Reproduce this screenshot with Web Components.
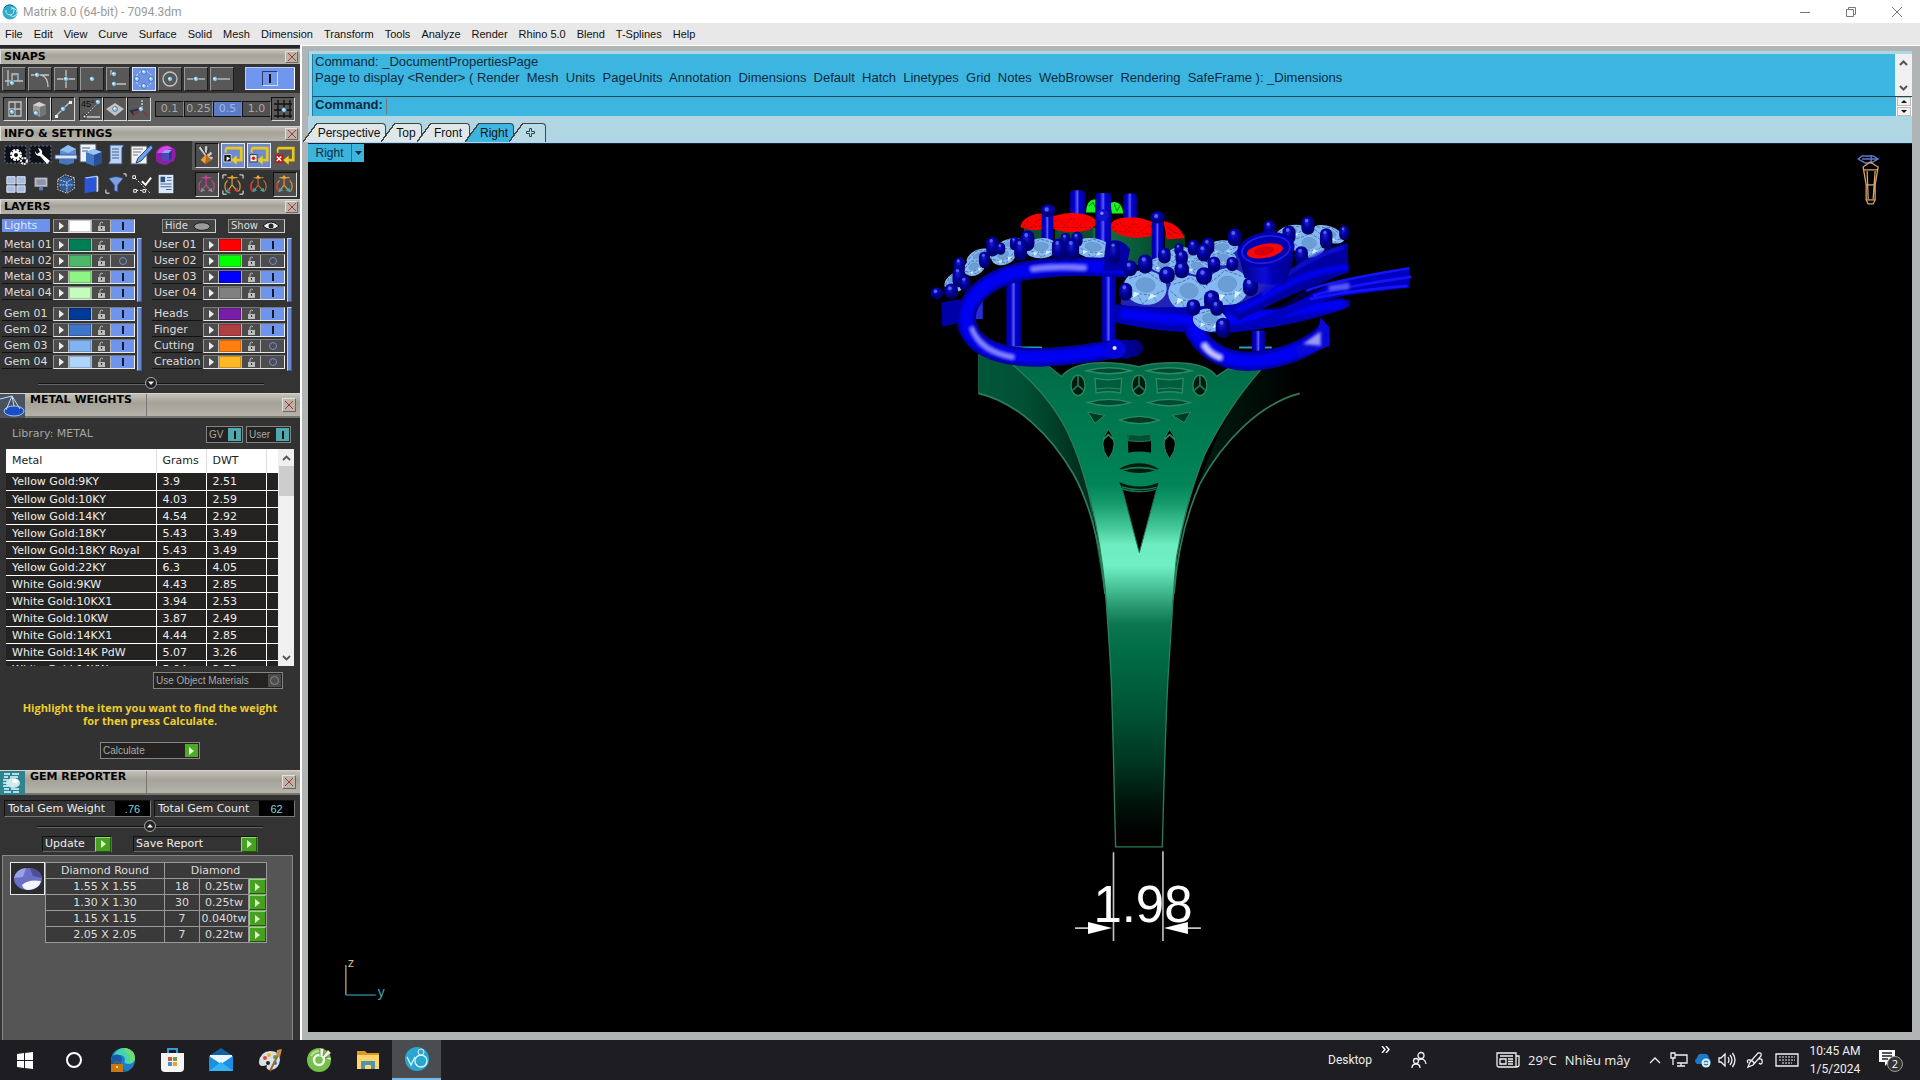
<!DOCTYPE html>
<html lang="en">
<head>
<meta charset="utf-8">
<title>Matrix 8.0 (64-bit) - 7094.3dm</title>
<style>
html,body{margin:0;height:100%}
body{background:#333;font-family:"DejaVu Sans",sans-serif;font-size:11px;line-height:14px;overflow:hidden}
matrix-app{height:100vh}
</style>
</head>
<body>
<matrix-app></matrix-app>
<script>
const BASE = `
*{box-sizing:border-box}
button{font:inherit;color:inherit;margin:0;padding:0;border:0;background:none;border-radius:0;display:flex;align-items:center;justify-content:center;line-height:inherit}
svg{display:block;flex:none}
`;
function define(name, css, html) {
  customElements.define(name, class extends HTMLElement {
    constructor() {
      super();
      const root = this.attachShadow({ mode: 'open' });
      root.innerHTML = '<style>' + BASE + css + '</style>' + (typeof html === 'function' ? html(this) : html);
    }
  });
}
const svg = (w, h, body, box) => `<svg width="${w}" height="${h}" viewBox="${box || `0 0 ${w} ${h}`}" fill="none" aria-hidden="true">${body}</svg>`;
const ball = (x, y) => `<circle cx="${x}" cy="${y}" r="2.4" fill="#9fd0ee" stroke="#24506e" stroke-width=".6"/><circle cx="${x - .7}" cy="${y - .7}" r=".9" fill="#fff"/>`;
const G = 'stroke="#c4c4c4" stroke-width="1.3"';

/* ---------- title bar ---------- */
define('title-bar', `
:host{display:flex;align-items:center;background:#fff;color:#999;font:12px/16px Roboto,sans-serif;padding-left:2px}
h1{font:inherit;margin:0 auto 0 5px}
button{width:46px;height:23px}`,
svg(16, 18, '<circle cx="8" cy="9" r="7.5" fill="#31a9c9"/><path d="M4 7a4 4 0 1 0 5-3M8 12a4 4 0 1 0 1-6" stroke="#b8ecf6"/><path d="M2 5q4-5 9-2" stroke="#176e8a"/>') +
`<h1><slot></slot></h1>
<button aria-label="Minimize">${svg(12, 12, '<path d="M1 6.5h10" stroke="#777"/>')}</button>
<button aria-label="Restore">${svg(12, 12, '<path d="M1.500 3.500h7v7h-7zM3.500 3.500v-2h7v7h-2" stroke="#777"/>')}</button>
<button aria-label="Close">${svg(12, 12, '<path d="M1 1l10 10M11 1L1 11" stroke="#777"/>')}</button>`);

/* ---------- menu ---------- */
define('menu-strip', `
:host{display:flex;align-items:center;background:#e8e8e8;color:#111;font:11px/14px "Liberation Sans",sans-serif;padding-left:5px;gap:11px}
button{white-space:nowrap}`,
['File','Edit','View','Curve','Surface','Solid','Mesh','Dimension','Transform','Tools','Analyze','Render','Rhino 5.0','Blend','T-Splines','Help'].map(t => `<button>${t}</button>`).join(''));

/* ---------- collapsible panel ---------- */
define('tool-panel', `
:host{display:block}
header{display:flex;align-items:center;height:15px;padding:0 2px 0 3px;background:linear-gradient(#c4c1b8,#a5a29a 40%,#b6b3aa);border-top:1px solid #d5d3cc;border-left:1px solid #ddd;color:#000}
h2{font:bold 11px/14px "DejaVu Sans",sans-serif;margin:0 auto 0 0}
button{width:13px;height:12px;background:#bab3aa;border:1px solid;border-color:#e4e0da #6b6760 #6b6760 #e4e0da}
.icon{display:none}
:host([tall]) header{height:25px;padding:0 4px 0 0;border-bottom:2px solid #77756f;align-items:stretch}
:host([tall]) .icon{display:block;width:25px;margin-left:-1px}
:host([tall]) h2{width:122px;padding-left:5px;margin:0 auto 0 0;line-height:12px;border-right:1px solid #777;height:22px}
:host([tall]) button{width:14px;height:14px;align-self:center}`,
`<header><span class="icon"><slot name="icon"></slot></span><h2><slot name="title"></slot></h2><button aria-label="Close panel">${svg(8, 8, '<path d="M0 0l8 8M8 0L0 8" stroke="#a33"/>')}</button></header><slot></slot>`);

/* ---------- snaps ---------- */
const snap1 = [
  `<path d="M5 2v16M2 13h18M9 13V6h6v7" ${G}/><path d="M10 7h5v5" stroke="#5c9edc"/>${ball(9, 15)}`,
  `<path d="M2 7h10Q19 9 19 19M10 7h10" ${G}/>${ball(8, 7)}`,
  `<path d="M2 11h18M11 2v18" ${G}/>${ball(11, 11)}`,
  ball(11, 11),
  `<path d="M4 2v5M7 16h12" ${G}/>${ball(7, 6)}${ball(7, 16)}`,
  `<circle cx="11" cy="11" r="8" stroke="#eaf2ff" stroke-dasharray="2 2"/>${ball(11, 4)}${ball(11, 18)}${ball(4, 11)}${ball(18, 11)}`,
  `<circle cx="11" cy="11" r="7" ${G}/>${ball(11, 11)}`,
  `<path d="M2 11h18" ${G}/>${ball(11, 11)}`,
  `<path d="M5 11h14" ${G}/>${ball(4, 11)}`
];
const snap2 = [
  `<path d="M5 4h12v14H5zM11 4v14M5 11h12" ${G}/>${ball(8, 14)}`,
  `<path d="M5 7l6-3 7 3v9l-6 3-7-3z" fill="#9a9a9a"/><path d="M5 7l6-3 7 3-6 2z" fill="#d2d2d2"/><path d="M12 9l6-2v9l-6 3z" fill="#757575"/>${ball(8, 15)}`,
  `<path d="M4 18L18 4" ${G}/><path d="M3 17h3v3H3zM17 3h3v3h-3z" fill="#eee"/>${ball(11, 11)}`,
  `<path d="M4 19L18 5" stroke="#fff" stroke-dasharray="1 2"/><path d="M5 19h15" stroke="#fff"/><path d="M3 17h3v3H3z" fill="#fff" stroke="#222"/>${ball(18, 4)}<text x="1" y="9" font-family="Liberation Sans" font-size="9" fill="#0c0c0c">45°</text>`,
  `<path d="M11 5l9 6-9 7-9-7z" fill="#c2c2c2"/>${ball(11, 11)}`,
  `<path d="M14 2v8" stroke="#fff" stroke-dasharray="2 1"/><path d="M13 11L3 13l3 4" stroke="#234" stroke-width="2"/><path d="M4 18l9-7 6 7" stroke="#a5242c" stroke-width="1.500" stroke-dasharray="3 1"/>${ball(13, 11)}`
];
define('snap-tools', `
:host{display:block;color:#bbb}
.row{display:flex}
.one{height:29px;padding:3px 5px 0 2px;gap:2px;background:#333}
.two{height:33px;padding:4px 4px 0 3px;background:#606060;align-items:flex-start}
.b{width:24px;height:24px;background:#585858;border:1px solid;border-color:#999 #1b1b1b #1b1b1b #999}
.two .b{border-color:#111 #d8d8d8 #d8d8d8 #111}
.b.on{background:#6f93e8;border-color:#dbe6ff}
.power{width:50px;height:23px;margin-left:auto;background:#7096ee;border:1px solid;border-color:#b9cbff #fff #fff #b9cbff}
.power i{width:16px;height:15px;border:1px solid #2b3d66;border-right-color:#cfe0ff;border-bottom-color:#cfe0ff;display:flex;justify-content:center;padding-top:2px}
.power i:after{content:"";width:2px;height:9px;background:#111}
.grp{display:flex;margin-right:4px}
.v{width:29px;height:16px;margin-top:4px;border:1px solid;border-color:#111 #888 #111 #111;background:#505050;color:#a9a9a9}
.v.on{background:#5b7cc4;color:#9cb6ee}`,
`<div class="row one">${snap1.map((s, i) => `<button class="b${i === 5 ? ' on' : ''}" aria-label="Snap ${i + 1}">${svg(22, 22, s)}</button>`).join('')}<button class="power" aria-label="Snaps on"><i></i></button></div>
<div class="row two"><div class="grp">${snap2.slice(0, 3).map(s => `<button class="b">${svg(22, 22, s)}</button>`).join('')}</div><div class="grp">${snap2.slice(3).map(s => `<button class="b">${svg(22, 22, s)}</button>`).join('')}</div>
${['0.1', '0.25', '0.5', '1.0'].map((t, i) => `<button class="v${i === 2 ? ' on' : ''}">${t}</button>`).join('')}
<button class="b">${svg(22, 22, '<path d="M6 2v18M12 2v18M18 2v18M2 6h18M2 12h18M2 18h18" stroke="#111" stroke-width="1.400"/>' + ball(12, 12))}</button></div>`);

/* ---------- info & settings ---------- */
const film = '<path d="M1 3h21v17H1z" fill="#0c1018" stroke="#5c719c" stroke-dasharray="2 2"/>';
const orb = (a, b, c, extra = '') => `<path d="M5 19a9 9 0 0 1 1-12M17 7a9 9 0 0 1 1 12M11 2v10M6 4h11M6 19l5-7 6 7" stroke="${a}" stroke-width="1.300"/><path d="M11 1l3 4H8z" fill="${b}"/><path d="M5 20l1-5 4 3zM18 20l-1-5-4 3z" fill="${c}"/>${extra}`;
const frameArrow = m => `<path d="M4 4h17v13h-6" stroke="#e8c81c" stroke-width="3"/><path d="M10 17l6-5v10z" fill="#e8d024"/><path d="M4 4v5" stroke="#e8c81c" stroke-width="2"/>${m}`;
const info1 = [
  film + '<circle cx="12" cy="12" r="4.500" stroke="#fff" stroke-width="3" stroke-dasharray="2.500 1"/><circle cx="12" cy="12" r="3" stroke="#fff" stroke-width="2"/><circle cx="20" cy="18" r="3" stroke="#eee" stroke-width="2" stroke-dasharray="2 .8"/>',
  film + '<path d="M6 8q0 5 5 5l7 8 3-3-8-7q1-5-4-6l2 4-3 2z" fill="#fff"/>',
  '<path d="M6 7l8-5 8 4v8H6z" fill="#5a8ed6"/><path d="M6 7l8-5 8 4-8 4z" fill="#8fbcf2"/><path d="M1 12h22v4H1z" fill="#dce8f8" stroke="#3b5d94"/><path d="M5 16h15v4l-7 2-8-2z" fill="#4576c0"/>',
  '<path d="M1 1h16v18H1z" fill="#eef4ff" stroke="#456"/><path d="M3 5h8M3 8h6" stroke="#557"/><path d="M7 9l8-3 8 3v11l-8 3-8-3z" fill="#3f76c8"/><path d="M7 9l8-3 8 3-8 3z" fill="#9cc4f5"/><path d="M15 12l8-3v11l-8 3z" fill="#264f96"/>',
  '<path d="M6 2h14l-2 3v16H4l2-3z" fill="#bcd4f2" stroke="#334d7a"/><path d="M8 6h7M8 9h7M8 12h7M8 15h7" stroke="#3c5f9a"/>',
  '<path d="M2 3h16v18H2z" fill="#eef2f6" stroke="#555"/><path d="M4 6h10M4 9h8M4 12h5" stroke="#777"/><path d="M22 2L9 15l-2 5 5-2L24 5z" fill="#6ba3e6" stroke="#244a86"/>',
  '<path d="M2 9q3-7 12-7l7 4q2 7-1 12l-8 4q-6 0-10-4z" fill="#8c1fa6"/><path d="M3 10Q6 3 14 3l5 3q-6 0-9 4z" fill="#d14be4"/><path d="M8 10h7v8H8z" fill="#4a49b8"/><path d="M8 10l3-3h7l-3 3z" fill="#9aa0f2"/><path d="M15 10l3-3v7l-3 4z" fill="#31309a"/>'
];
const info2 = [
  '<path d="M2 4h9v8H2zM13 4h9v8h-9zM2 14h9v7H2zM13 14h9v7h-9z" fill="#a9bce2" stroke="#e6eefc"/>',
  '<path d="M5 5h14v10H5z" fill="#b8bcc8"/><path d="M7 7h10v6H7z" fill="#8d94a8"/><path d="M10 15h4v4h-4z" fill="#5c7cc2"/>',
  '<circle cx="12" cy="12" r="8" fill="#2e5c9c"/><path d="M3 7l8-5 10 3v12l-8 5-10-4zM3 7l10 3 8-5M13 10v12M5 13h14" stroke="#cfe2ff" stroke-dasharray="2 1"/>',
  '<path d="M5 5l13-2v17L5 22z" fill="#2b56d8"/><path d="M5 5l13-2 2 1-13 2z" fill="#a5c1ff"/><path d="M18 3l2 1v16l-2 1z" fill="#dde"/>',
  '<path d="M4 6q8-4 16 0l-6 7v8l-4-2v-6z" fill="#7e9fe0" stroke="#2d4888"/><path d="M1 18v4h4M20 1h3v3" stroke="#fff"/>',
  '<path d="M3 3h3v3H3zM4 18h3v3H4zM14 18h3v3h-3z" stroke="#fff"/><path d="M6 6l12 12 4 4M7 19h7" stroke="#fff" stroke-dasharray="2 2"/><path d="M13 9l4 4 6-8" stroke="#fff" stroke-width="2"/>',
  '<path d="M4 2h16v20H4z" fill="#dbe8f8"/><path d="M6 4h5v6H6z" fill="#2c4f80"/><path d="M13 5h5M13 8h5M6 12h12M6 15h12M12 18h6" stroke="#385a8a"/>'
];
const info3 = [
  '<path d="M4 3l8 10M11 2v11M17 9l-6 5M18 15l-7-1" stroke="#ccc" stroke-width="2.500"/><path d="M6 3l6 9M14 4l-3 8" stroke="#222"/><path d="M5 17l6-6 6 6-7 4z" fill="#f0a030"/><path d="M11 11l6 6-7 4z" fill="#b86a18"/>',
  frameArrow('<path d="M2 11h8v8H2z" fill="#111" stroke="#ddd"/><path d="M5 13l4 2-4 3z" fill="#fff"/>'),
  frameArrow('<path d="M2 11h8v8H2z" fill="#eee" stroke="#333"/><circle cx="6" cy="15" r="2" fill="#c22"/>'),
  frameArrow('<path d="M1 11h9v9H1z" fill="#c01818"/><path d="M3 13l5 5M8 13l-5 5" stroke="#fff" stroke-width="1.500"/>')
];
const info4 = [orb('#c0488a', '#d23c96', '#8d8d8d'),
  orb('#e0a030', '#e8a030', '#d04050', '<path d="M1 5V1h4M19 1h4v4M23 18v4h-4M5 22H1v-4" stroke="#fff"/><path d="M4 18q2 3 5 2" stroke="#29b49a" stroke-width="2"/>'),
  orb('#b07038', '#e8b040', '#3aa894', '<path d="M5 19a9 9 0 0 1-1-9" stroke="#c2383a" stroke-width="2"/>'),
  orb('#e09838', '#f2a63c', '#3cb0a8', '<path d="M5 19a9 9 0 0 1-1-9" stroke="#c43c42" stroke-width="2"/>')];
define('info-tools', `
:host{display:block;background:#333}
.row{display:flex;height:29px;padding-left:3px;justify-content:space-between}
.l{display:flex}.l button{width:25px;height:28px}
.r{display:flex;gap:2px;padding:2px 2px 2px 3px;width:108px}
.top{background:#595959}
.r button{width:24px;height:25px}
.r .box{background:#4c4c4c;border:1px solid;border-color:#111 #ddd #ddd #111}
.r .blue{background:#6f8bd0;border:1px solid #dfe8ff}`,
`<div class="row"><div class="l">${info1.map(s => `<button>${svg(24, 24, s)}</button>`).join('')}</div><div class="r top">${info3.map((s, i) => `<button class="${['box', 'blue', 'blue', ''][i]}">${svg(22, 23, s, '0 0 24 24')}</button>`).join('')}</div></div>
<div class="row"><div class="l">${info2.map(s => `<button>${svg(22, 22, s, '0 0 24 24')}</button>`).join('')}</div><div class="r">${info4.map((s, i) => `<button class="${['box', '', '', 'box'][i]}">${svg(22, 22, s, '0 0 24 24')}</button>`).join('')}</div></div>`);

/* ---------- layers ---------- */
define('layer-controls', `
:host{display:flex;width:82px;height:14px;background:#b5b5b5;border:1px solid;border-color:#777 #f0f0f0 #e8e8e8 #999;gap:1px}
button{height:12px;background:#4b4b4b}
.a{width:14px}.c{width:22px;background:var(--c);border:1px solid #0003}.k{width:18px}.t{width:24px;flex:1;background:#6e94ec}
.t:after{content:"";width:2px;height:8px;background:#151a26}
:host([off]) .t{background:#4d4d4d}
:host([off]) .t:after{width:6px;height:6px;border-radius:50%;border:1px solid #6f8fd8;background:none}`,
`<button class="a" aria-label="Expand">${svg(5, 8, '<path d="M0 0l5 4-5 4z" fill="#eee"/>')}</button><button class="c" aria-label="Colour"></button><button class="k" aria-label="Lock">${svg(9, 10, '<path d="M3 5V2q2-2 3 0" stroke="#bbb"/><path d="M1 5h7v5H1z" fill="#bbb"/><path d="M4 6h1v2H4z" fill="#333"/>')}</button><button class="t" aria-label="Visible"></button>`);
const layer = ([n, c, off]) => `<div class="row"><span>${n}</span><layer-controls style="--c:${c}"${off ? ' off' : ''}></layer-controls></div>`;
const group = list => `<div class="grp"><div>${list.map(layer).join('')}</div><i></i></div>`;
define('layer-list', `
:host{display:block;height:179px;background:#333;color:#ddd;padding:5px 0 0 2px}
.top{display:flex;height:14px;margin-bottom:5px;padding-right:15px}
.lights{width:48px;height:13px;background:#6c92ea;color:#dfe8ff;justify-content:flex-start;padding-left:2px;margin-right:3px}
.hs{height:14px;border:1px solid;border-color:#888 #ccc #ccc #888;background:#444;font-size:10px;line-height:12px;padding:0 4px 0 2px;justify-content:space-between}
.hide{width:54px;margin-left:27px}.show{width:57px;margin-left:auto}
.cols{display:flex;gap:10px;margin-bottom:5px}
.grp{display:flex;gap:2px}
.grp i{width:5px;background:#6685cc;border:1px solid;border-color:#b9cdff #44589a #44589a #b9cdff}
.row{display:flex;height:16px;width:133px;justify-content:space-between}
.row span{width:50px;padding-left:2px;height:14px;line-height:13px;border-bottom:1px solid #111;white-space:nowrap}
rule-knob{margin-top:6px}`,
`<div class="top"><button class="lights">Lights</button><layer-controls style="--c:#fff"></layer-controls>
<button class="hs hide">Hide${svg(18, 9, '<ellipse cx="9" cy="4.500" rx="8" ry="3.800" fill="#999" stroke="#222"/>')}</button><button class="hs show">Show${svg(18, 10, '<path d="M1 5q8-8 16 0-8 7-16 0z" fill="#eee" stroke="#111"/><circle cx="9" cy="5" r="2.500" fill="#222"/>')}</button></div>
<div class="cols">${group([['Metal 01', '#007f55'], ['Metal 02', '#4cb96a', 1], ['Metal 03', '#8cf583'], ['Metal 04', '#c3fdbd']])}${group([['User 01', '#f00'], ['User 02', '#0f0', 1], ['User 03', '#00f'], ['User 04', '#808080']])}</div>
<div class="cols">${group([['Gem 01', '#003a96'], ['Gem 02', '#3f75c8'], ['Gem 03', '#82b4f3'], ['Gem 04', '#b0d3fa']])}${group([['Heads', '#7a1ea8'], ['Finger', '#ae4044'], ['Cutting', '#ff8010', 1], ['Creation', '#ffb726', 1]])}</div>
<rule-knob></rule-knob>`);
define('rule-knob', `
:host{display:flex;justify-content:center;align-items:center;height:12px;width:226px;margin:0 auto;background:linear-gradient(#111,#111) center/100% 1px no-repeat,linear-gradient(#666,#666) 0 7px/100% 1px no-repeat}
:host([up]) svg{transform:rotate(180deg)}
button{width:12px;height:12px}`,
`<button aria-label="Toggle section">${svg(12, 12, '<circle cx="6" cy="6" r="5.500" fill="#222" stroke="#aaa"/><path d="M3 4.500h6L6 8z" fill="#eee"/>')}</button>`);

/* ---------- metal weights ---------- */
const metals = [['Yellow Gold:9KY', '3.9', '2.51'], ['Yellow Gold:10KY', '4.03', '2.59'], ['Yellow Gold:14KY', '4.54', '2.92'], ['Yellow Gold:18KY', '5.43', '3.49'], ['Yellow Gold:18KY Royal', '5.43', '3.49'], ['Yellow Gold:22KY', '6.3', '4.05'], ['White Gold:9KW', '4.43', '2.85'], ['White Gold:10KX1', '3.94', '2.53'], ['White Gold:10KW', '3.87', '2.49'], ['White Gold:14KX1', '4.44', '2.85'], ['White Gold:14K PdW', '5.07', '3.26'], ['White Gold:14KW', '5.04', '3.75']];
define('metal-weights', `
:host{display:flex;flex-direction:column;height:352px;background:#323232;padding:8px 6px 0;color:#eee}
.lib{display:flex;gap:3px;height:17px;margin-bottom:6px;padding:0 3px 0 6px;color:#a5a5a5}
.lib span{margin-right:auto;line-height:15px}
.o{font:10px/14px "Liberation Sans",sans-serif;color:#a8a8a8;background:#242321;border:1px solid #858585;justify-content:space-between;padding:0 1px 0 2px;height:17px}
.o i{width:13px;height:13px;background:#4fa8ae;display:flex;align-items:center;justify-content:center}
.o i:after{content:"";width:2px;height:8px;background:#111}
.o.off i{background:#4c4c4c}.o.off i:after{width:7px;height:7px;border:1px solid #888;border-radius:50%;background:none}
.wrap{display:flex;height:217px;overflow:hidden;background:#242321;flex:none}
table{border-collapse:collapse;table-layout:fixed;width:272px}
th{font-weight:normal;text-align:left;background:#fff;color:#222;height:24px;border-right:1px solid #ddd;padding:0 0 0 6px}
td{height:17px;border-right:1px solid #fff;border-bottom:1px solid #fff;padding:1px 0 0 6px;white-space:nowrap;line-height:15px}
td:last-child,th:last-child{border-right:0}
th:nth-child(1){width:150px}th:nth-child(2){width:50px}th:nth-child(3){width:60px}
.sb{width:16px;background:#f0f0f0;display:flex;flex-direction:column;justify-content:space-between;align-items:center}
.sb button{width:16px;height:17px}.sb i{width:15px;height:30px;background:#cdcdcd;margin-bottom:auto}
.mat{width:130px;align-self:flex-end;margin:6px 11px 0 0;flex:none}
p{margin:12px 0 0;text-align:center;color:#eccf2c;font:bold 11px/13px "Open Sans",sans-serif}
.calc{width:100px;margin:15px 0 0 94px;flex:none}
.calc i{background:#4bab25}.calc i:after{width:0;height:0;background:none;border:4px solid transparent;border-left:5px solid #e8ffd8;border-right:0}`,
`<div class="lib"><span>Library: METAL</span><button class="o" style="width:37px">GV<i></i></button><button class="o" style="width:45px">User<i></i></button></div>
<div class="wrap"><table><thead><tr><th>Metal</th><th>Grams</th><th>DWT</th><th></th></tr></thead><tbody>${metals.map(r => `<tr><td>${r[0]}</td><td>${r[1]}</td><td>${r[2]}</td><td></td></tr>`).join('')}</tbody></table>
<div class="sb"><button aria-label="Up">${svg(9, 6, '<path d="M1 5l3.500-3.500L8 5" stroke="#555" stroke-width="1.800"/>')}</button><i></i><button aria-label="Down">${svg(9, 6, '<path d="M1 1l3.500 3.500L8 1" stroke="#555" stroke-width="1.800"/>')}</button></div></div>
<button class="o off mat">Use Object Materials<i></i></button>
<p>Highlight the item you want to find the weight<br>for then press Calculate.</p>
<button class="o calc">Calculate<i></i></button>`);

/* ---------- gem reporter ---------- */
const gems = [['1.55 X 1.55', 18, '0.25tw'], ['1.30 X 1.30', 30, '0.25tw'], ['1.15 X 1.15', 7, '0.040tw'], ['2.05 X 2.05', 7, '0.22tw']];
define('gem-reporter', `
:host{display:flex;flex-direction:column;flex:1;background:#333;color:#eee;padding:5px 0 0;font-size:11px}
.tot{display:flex;gap:3px;padding:0 5px 0 4px}
.tot div{display:flex;flex:1 1 141px;height:17px;border:1px solid #777;border-top-color:#111;border-left-color:#111;white-space:nowrap;justify-content:space-between;line-height:15px}
.tot div:first-child{flex-basis:147px}
.tot span{padding-left:3px}
output{width:35px;background:#000;color:#84d6d6;text-align:center;font:11px/16px "Liberation Sans",sans-serif}
rule-knob{margin:3px auto 4px}
.act{display:flex;gap:21px;padding-left:42px;height:16px;margin-bottom:3px}
.act button{border:1px solid;border-color:#111 #666 #666 #111;justify-content:space-between;padding-left:2px;height:16px}
.g{width:16px;height:15px;background:#48a023;border:1px solid;border-color:#8fe060 #1f5a0c #1f5a0c #8fe060;display:flex;align-items:center;justify-content:center}
.g:after{content:"";border:4px solid transparent;border-left:5px solid #d9ffc4;border-right:0}
.pan{flex:1;background:#555;border:1px solid #888;border-bottom:0;margin:0 7px 0 2px;padding:6px 0 0 7px;display:flex;align-items:flex-start}
.th{width:35px;height:33px;border:1px solid #e8e8e8;background:#2c2c2e;display:flex;align-items:center;justify-content:center}
table{border-collapse:collapse;table-layout:fixed;width:221px;background:#3a3a3a;color:#ddd}
th,td{border:1px solid #999;font-weight:normal;height:16px;padding:0;text-align:center;line-height:14px;white-space:nowrap}
.pan .g{width:17px;height:15px}`,
`<div class="tot"><div><span>Total Gem Weight</span><output>.76</output></div><div><span>Total Gem Count</span><output>62</output></div></div>
<rule-knob up></rule-knob>
<div class="act"><button style="width:70px">Update<i class="g"></i></button><button style="width:125px">Save Report<i class="g"></i></button></div>
<div class="pan"><div class="th">${svg(32, 28, '<ellipse cx="16" cy="14" rx="14" ry="11" fill="#6a6fc8"/><path d="M2 13q2-9 12-10l-3 9z" fill="#9aa0e4"/><path d="M18 3q11 2 12 10l-9-2z" fill="#4c4f9a"/><path d="M10 20q6-6 19-4-2 8-12 9-6 0-7-5z" fill="#f4f6ff"/>')}</div>
<table><colgroup><col style="width:119px"><col style="width:35px"><col style="width:49px"><col style="width:18px"></colgroup><thead><tr><th>Diamond Round</th><th colspan="3">Diamond</th></tr></thead><tbody>${gems.map(g => `<tr><td>${g[0]}</td><td>${g[1]}</td><td>${g[2]}</td><td><button class="g" aria-label="Show ${g[0]}"></button></td></tr>`).join('')}</tbody></table></div>`);

/* ---------- sidebar ---------- */
define('side-bar', `
:host{display:flex;flex-direction:column;width:300px;flex:none;background:#333;min-height:0;overflow:hidden}
.strip{height:4px;background:#24262b;border-bottom:1px solid #555;flex:none}
tool-panel{flex:none}`,
`<div class="strip"></div>
<tool-panel><span slot="title">SNAPS</span><snap-tools></snap-tools></tool-panel>
<tool-panel><span slot="title">INFO &amp; SETTINGS</span><info-tools></info-tools></tool-panel>
<tool-panel><span slot="title">LAYERS</span><layer-list></layer-list></tool-panel>
<tool-panel tall><span slot="icon">${svg(25, 24, '<path d="M0 0h25v24H0z" fill="#4a5260"/><ellipse cx="14" cy="17" rx="10" ry="5" fill="#1c4cc4" stroke="#9cc8ff"/><path d="M0 5l12-3 8 13M12 2l-6 14M12 2l2 10" stroke="#bfe0ff"/>')}</span><span slot="title">METAL WEIGHTS</span><metal-weights></metal-weights></tool-panel>
<tool-panel tall><span slot="icon">${svg(25, 24, '<path d="M0 0h25v24H0z" fill="#2f8390"/><path d="M4 3h6M12 3h7M4 6h4M10 6h8M4 18h5M11 18h8M4 21h7M13 21h6M3 9h5M3 12h4M3 15h5" stroke="#dff" stroke-width="1.500"/><ellipse cx="13" cy="12" rx="7" ry="5" fill="#cfe9ee"/><ellipse cx="15" cy="10" rx="3" ry="2" fill="#fff"/>')}</span><span slot="title">GEM REPORTER</span></tool-panel>
<gem-reporter></gem-reporter>`);

/* ---------- command area ---------- */
define('command-area', `
:host{display:flex;flex-direction:column;background:#b0d6e4;padding-top:3px;color:#102a3c;font:13px/16px "Liberation Sans",sans-serif;border-left:1px solid #7fb0c4}
.log{display:flex;height:43px;background:#3cb6e0;border-bottom:1px solid #1c4858;border-left:1px solid #247a9a;margin-left:3px}
.log pre{font:inherit;margin:0;flex:1;padding-left:2px;white-space:pre}
.sb{width:17px;background:#f0f0f0;display:flex;flex-direction:column;justify-content:space-between}
.sb button{width:17px;height:17px}
.cmd{display:flex;height:19px;background:#3cb6e0;margin-left:3px;border-left:1px solid #247a9a;align-items:flex-start}
label{font-weight:bold;padding:0 3px 0 2px}
input{flex:1;min-width:0;border:0;border-left:1px solid #777;background:none;font:inherit;outline:0;padding:0 2px;height:16px;margin-top:1px}
.spin{display:flex;flex-direction:column;width:16px;background:#fff;height:19px;gap:1px;padding:0 1px}
.spin button{height:9px;background:#f2f2f2;border:1px solid #bbb}`,
`<div class="log"><pre>Command: _DocumentPropertiesPage
Page to display &lt;Render&gt; ( Render  Mesh  Units  PageUnits  Annotation  Dimensions  Default  Hatch  Linetypes  Grid  Notes  WebBrowser  Rendering  SafeFrame ): _Dimensions</pre>
<div class="sb"><button aria-label="Up">${svg(9, 6, '<path d="M1 5l3.500-3.500L8 5" stroke="#555" stroke-width="2"/>')}</button><button aria-label="Down">${svg(9, 6, '<path d="M1 1l3.500 3.500L8 1" stroke="#555" stroke-width="2"/>')}</button></div></div>
<div class="cmd"><label for="c">Command:</label><input id="c" type="text"><div class="spin"><button aria-label="Previous">${svg(6, 3, '<path d="M0 3l3-3 3 3z" fill="#111"/>')}</button><button aria-label="Next">${svg(6, 3, '<path d="M0 0h6L3 3z" fill="#111"/>')}</button></div></div>`);

/* ---------- viewport tabs ---------- */
define('view-tabs', `
:host{display:flex;height:27px;align-items:flex-end;background:#b0d6e4;font:12px/16px "Liberation Sans",sans-serif;color:#111;padding-bottom:1px}
button{position:relative;height:19px;isolation:isolate;white-space:nowrap}
button:before{content:"";position:absolute;inset:0 0 0 9px;background:var(--f,#dfe7e9);border:1px solid #444;border-bottom:0;border-left:0;border-radius:0 4px 0 0;z-index:-1}
button:after{content:"";position:absolute;left:-5px;top:0;width:14px;height:19px;background:linear-gradient(to bottom right,transparent 47%,#444 47%,#444 53%,var(--f,#dfe7e9) 53%);z-index:-1}
.on{--f:#3cb6e0}.plus{--f:#b9dbe6}`,
[['Perspective', 78], ['Top', 36], ['Front', 48], ['Right', 44]].map(([t, w], i) => `<button role="tab" class="${i === 3 ? 'on' : ''}" style="width:${w}px;padding-left:4px">${t}</button>`).join('') +
`<button class="plus" aria-label="Add view" style="width:32px">${svg(9, 9, '<path d="M3.500.500h2v3h3v2h-3v3h-2v-3h-3v-2h3z" stroke="#345"/>')}</button>`);

/* ---------- ring model ---------- */
const gem = (x, y, rx, ry, r = 0) => `<g transform="translate(${x} ${y}) rotate(${r}) scale(1.08)"><ellipse rx="${rx}" ry="${ry}" fill="#84b8f0"/><path d="M${-rx * .9} 0L${-rx * .35} ${ry * .4} 0 ${ry * .95} ${rx * .4} ${ry * .4} ${rx * .9} 0M${-rx * .6} ${ry * .7}L${-rx * .35} ${ry * .4}H${rx * .4}L${rx * .6} ${ry * .7}M${-rx * .8} ${-ry * .4}L${-rx * .4} ${-ry * .6} 0 ${-ry * .9} ${rx * .5} ${-ry * .6} ${rx * .8} ${-ry * .4}" stroke="#3d6698" stroke-width="2" stroke-dasharray="9 4"/><path d="M${-rx * .5} ${ry * .3}l${rx * .3} ${ry * .1}-${rx * .3} ${ry * .3}zM${rx * .3} ${ry * .3}l${rx * .3} ${ry * .1}-${rx * .4} ${ry * .3}z" fill="#d5f0ff"/><ellipse cy="${-ry * .15}" rx="${rx * .45}" ry="${ry * .42}" fill="#6c9ed6" stroke="#5580b4"/></g>`;
const prong = (x, y, r = 19, h = 34) => `<rect x="${x - r}" y="${y - r}" width="${2 * r}" height="${h + r}" rx="${r}" fill="url(#prong)"/><ellipse cx="${x - r * .2}" cy="${y - r * .3}" rx="${r * .28}" ry="${r * .3}" fill="#5660e8"/>`;
const post = (x, y, h, w = 40) => `<rect x="${x - w / 2}" y="${y}" width="${w}" height="${h}" rx="12" fill="url(#post)"/>`;
const tube = (d, w, hi = '') => `<path d="${d}" stroke="#0000a0" stroke-width="${w}"/><g filter="url(#soft)"><path d="${d}" stroke="#0202f2" stroke-width="${w * .66}"/>${hi}</g>`;
const red = (x, y, rx, ry, r) => `<g transform="translate(${x} ${y}) rotate(${r})"><ellipse rx="${rx}" ry="${ry}" fill="#f00"/><path d="M${-rx * .9} ${ry * .2}L${-rx * .6} ${-ry * .4} ${-rx * .3} ${ry * .3} 0 ${-ry * .5} ${rx * .3} ${ry * .3} ${rx * .6} ${-ry * .4} ${rx * .9} ${ry * .2}M${-rx * .8} ${ry * .5}H${rx * .8}" stroke="#b80000" stroke-width="3" stroke-dasharray="8 5"/></g>`;
const leaf = (x, y, w, h, f = '#004a30') => `<path d="M${x - w} ${y}Q${x} ${y - h * 2} ${x + w} ${y}Q${x} ${y + h * 2} ${x - w} ${y}z" fill="${f}" stroke="#2b8a64" stroke-width="4"/>`;
const eye = (x, y) => `<ellipse cx="${x}" cy="${y}" rx="21" ry="31" fill="#001a10" stroke="#2b8a64" stroke-width="4"/><path d="M${x} ${y - 28}V${y + 2}M${x - 17} ${y + 15}L${x} ${y}l17 15" stroke="#1d7853" stroke-width="5"/>`;
const band = `<g transform="translate(940 340) scale(.33333)">
<path d="M115 40V158C230 185 330 280 400 400C450 490 480 600 495 760L440 420C390 260 320 140 220 60z" fill="url(#back)" stroke="#256f51" stroke-width="2"/>
<path d="M962 80H1065V160C960 185 850 300 800 400L780 420C830 290 880 170 962 80z" fill="url(#backr)"/>
<path d="M115 158C230 185 330 280 400 400C450 490 480 600 495 760M1080 158C960 190 850 300 780 430C740 520 712 640 702 760" stroke="#317a5a" stroke-width="5"/>
<path d="M215 70L325 76 365 107C390 75 440 66 490 66C540 66 570 72 597 78C630 68 660 66 700 66C760 66 810 78 830 107L865 84 962 88C880 180 820 290 795 340C750 450 725 560 710 650C700 740 692 900 685 1000C675 1180 672 1350 667 1520H527C522 1350 520 1180 513 1000C507 900 500 800 495 740C480 600 460 500 430 400C400 300 360 190 215 70z" fill="url(#metal)" stroke="#2a7d5b" stroke-width="4"/>
${leaf(507, 90, 68, 9)}${leaf(688, 90, 68, 9)}${leaf(507, 186, 65, 10)}${leaf(688, 186, 65, 10)}${leaf(598, 238, 60, 11, '#003a24')}
<path d="M465 113Q505 121 545 113L542 157Q505 149 468 157zM649 113Q690 121 730 113L727 157Q690 149 652 157z" fill="#005c3c" stroke="#2b8a64" stroke-width="4"/><path d="M468 145Q505 138 542 145M652 145Q690 138 727 145" stroke="#2b8a64" stroke-width="3"/>
${eye(414, 134)}${eye(597, 134)}${eye(780, 134)}
<path d="M443 214L494 224 465 248zM752 214L697 224 733 246z" fill="#003a24" stroke="#2b8a64" stroke-width="3"/>
<path d="M505 265Q472 310 505 355Q540 310 505 265zM689 265Q656 310 689 355Q724 310 689 265z" fill="#000" stroke="#2b8a64" stroke-width="3"/><path d="M490 296L505 282l15 14M674 296L689 282l15 14" stroke="#2b8a64" stroke-width="5"/>
<path d="M563 280Q598 288 633 279V336Q598 329 565 336z" fill="#000"/><path d="M564 281Q598 288 632 281V300Q598 306 564 300z" fill="#005034" stroke="#1d7853" stroke-width="3"/>
<path d="M538 384Q598 352 656 384Q598 410 538 384z" fill="#001c11"/><path d="M545 388Q598 374 650 388" stroke="#157a51" stroke-width="5"/>
<path d="M538 425Q598 450 656 426L650 445Q598 460 545 442z" fill="#001c11"/><path d="M545 439Q598 455 650 440" stroke="#157a51" stroke-width="4"/>
<path d="M547 446Q598 462 650 446L598 636z" fill="#000" stroke="#246c50" stroke-width="3"/></g>`;
const head = `<g transform="translate(900 170) scale(.34444 .33333)">
<path d="M360 170H440V215H360zM540 170H640V240H540zM615 180H740V300L650 270zM770 190H828V240H770z" fill="url(#cup)"/>
<path d="M360 160H440V215H360zM450 170H560V215H450z" fill="#0c4c34"/>
${post(515, 58, 90, 44)}${post(668, 68, 80, 40)}
<path d="M540 125Q540 88 565 85L580 95V125zM610 95Q645 85 648 128H615z" fill="#17f51c"/><path d="M548 105l12-10 10 20M622 100l8 20 10-18" stroke="#078c0a" stroke-width="3"/>
<path d="M350 165Q365 130 410 128L455 135V172Q400 178 350 170z" fill="#f00"/>${red(402, 155, 50, 22, -8)}${red(500, 155, 70, 29, 0)}${red(680, 170, 70, 30, 5)}<path d="M765 150Q815 160 826 202L775 205z" fill="#f00"/><path d="M775 165l20 20 20 5M778 185l12 10" stroke="#b80000" stroke-width="3"/>
${post(590, 66, 160, 46)}<circle cx="588" cy="132" r="18" fill="#1010d0"/><circle cx="586" cy="127" r="5" fill="#7a80ff"/>
${post(428, 110, 110, 34)}${prong(430, 122, 22, 16)}${post(748, 140, 130, 34)}${prong(748, 142, 21, 16)}
${gem(320, 225, 38, 20, -15)}${gem(230, 260, 36, 22, -25)}${gem(300, 255, 34, 25, -20)}${gem(215, 290, 30, 22, -25)}${gem(155, 330, 30, 18, -45)}${gem(160, 348, 20, 14)}${gem(410, 232, 44, 28, -5)}${gem(560, 232, 50, 28, 8)}
<path d="M120 395L175 385V455L122 468z" fill="#0000a8"/><path d="M215 380H240V445H215z" fill="#2a2ad8"/>
${post(330, 310, 225, 44)}${post(606, 310, 225, 42)}<path d="M310 530H412M985 530H1080" stroke="#2c9caa" stroke-width="6"/>
${tube('M660 292C560 285 440 285 350 302C230 330 187 400 192 450C200 518 270 558 390 560C480 560 560 545 625 535', 56,
  '<path d="M380 295C430 287 480 287 540 291" stroke="#8080ff" stroke-width="14"/><path d="M208 470C225 525 270 548 330 560" stroke="#8c8cff" stroke-width="12"/>')}
<path d="M588 300L598 215Q640 195 668 235L655 300z" fill="#0000a4"/>
<circle cx="680" cy="532" r="25" fill="#00007a" stroke="#0000b8"/><circle cx="655" cy="535" r="28" fill="#000092" stroke="#0000c8"/><circle cx="625" cy="535" r="30" fill="#0404dc"/><circle cx="623" cy="532" r="6" fill="#dfe4ff"/>
${[[268, 215, 18, 42], [292, 228, 13, 24], [332, 210, 13, 28], [370, 198, 20, 42], [350, 222, 19, 48], [172, 275, 16, 34], [245, 258, 16, 34], [170, 305, 18, 44], [188, 330, 16, 30], [106, 367, 18, 18], [148, 358, 20, 26], [480, 200, 14, 30], [514, 198, 16, 30], [460, 222, 19, 48], [500, 222, 20, 48], [622, 228, 17, 52]].map(a => prong(...a)).join('')}
<path d="M650 330L780 250 980 220 1070 330 1180 300 1000 430 760 450 640 400z" fill="#2222b4"/>
${gem(936, 232, 42, 22, -5)}${gem(825, 255, 42, 24, 8)}${gem(765, 282, 36, 22, 5)}${gem(862, 288, 36, 22, 8)}${gem(938, 262, 36, 20, 0)}${gem(800, 315, 25, 25)}
${gem(712, 350, 58, 48, 8)}${gem(838, 368, 55, 50, 8)}${gem(952, 348, 56, 52, -10)}
${gem(1135, 185, 40, 20, -15)}${gem(1245, 190, 45, 22, 20)}${gem(1188, 222, 44, 36, 5)}
${[[972, 192, 20, 34], [1073, 165, 17, 30], [1185, 155, 19, 36], [1290, 178, 14, 30], [1130, 183, 19, 36], [1238, 190, 18, 44], [1166, 245, 19, 38], [852, 222, 16, 32], [895, 218, 18, 34], [768, 248, 18, 30], [810, 230, 13, 24], [818, 255, 18, 28], [882, 238, 20, 34], [712, 272, 21, 36], [668, 288, 20, 28], [912, 275, 18, 30], [965, 275, 17, 26], [818, 292, 21, 30], [775, 310, 23, 28], [883, 312, 23, 30], [655, 355, 19, 34], [1018, 340, 22, 36]].map(a => prong(...a)).join('')}
<path d="M1150 290L1215 255 1300 215V300L1180 360z" fill="#000078"/>
<path d="M618 400C680 408 780 412 850 408L980 400C1100 440 1220 400 1305 385V408C1200 450 1080 475 960 485C820 490 700 475 618 452z" fill="#0000b4"/>
<path d="M640 428C760 445 880 455 980 445C1080 435 1180 410 1290 398" stroke="#0505f4" stroke-width="30" filter="url(#soft)"/>
<path d="M960 405C1060 380 1120 300 1300 215L1303 305C1200 340 1080 400 980 450z" fill="#0000a0"/><g filter="url(#soft)"><path d="M975 420C1080 380 1150 300 1302 290" stroke="#0606f0" stroke-width="18"/><path d="M1050 370C1120 310 1200 250 1290 228" stroke="#1010d8" stroke-width="14"/></g>
<path d="M1000 455C1120 430 1190 340 1290 325L1480 290V350L1310 372C1200 385 1120 450 1000 475z" fill="#0000c0"/><path d="M1080 420C1130 395 1150 370 1190 350L1240 345C1180 380 1130 410 1080 420z" fill="#000040"/><path d="M1180 360Q1250 330 1480 292M1200 375Q1270 350 1485 318M1190 385Q1300 360 1475 345" stroke="#1414fa" stroke-width="8"/><path d="M1245 345l60-10v20l-60 6z" fill="#5a5af8" filter="url(#soft)"/>
<path d="M985 255L1000 320Q1050 350 1120 338L1148 250z" fill="url(#cupb)"/><ellipse cx="1063" cy="236" rx="84" ry="52" fill="#0000b0" transform="rotate(-10 1063 236)"/><ellipse cx="1063" cy="236" rx="70" ry="40" stroke="#2020e0" stroke-width="5" transform="rotate(-10 1063 236)"/><ellipse cx="1060" cy="240" rx="53" ry="21" fill="#f50a0a" transform="rotate(-10 1060 240)"/><ellipse cx="1058" cy="240" rx="30" ry="13" fill="#d80008" transform="rotate(-10 1058 240)"/>
<path d="M1022 480H1060V540H1022z" fill="url(#post)"/>
${tube('M848 465C880 540 940 570 1010 572C1090 570 1180 540 1232 490', 58,
  '<path d="M885 525Q900 550 928 560" stroke="#c4c4ff" stroke-width="16" stroke-linecap="round"/>')}
<path d="M1150 530Q1215 500 1222 440L1248 470V525L1160 560z" fill="#0808d8"/><path d="M1170 520L1222 482V525z" fill="#9a9af0" filter="url(#soft)"/>
${gem(900, 448, 46, 32, 8)}${prong(905, 380, 22, 36)}${prong(852, 405, 20, 30)}${prong(920, 405, 19, 30)}${prong(938, 462, 21, 40)}
</g>`;
const stops = list => list.map(([o, c]) => `<stop offset="${o}" stop-color="${c}"/>`).join('');
define('ring-view', `
:host{display:block;position:relative;background:#000;overflow:hidden;min-height:0}
svg.scene{width:100%;height:100%}
.name{position:absolute;left:0;top:0;display:flex;height:18px;background:#3cb4dc;color:#0c2c40;font:12px/16px "Liberation Sans",sans-serif}
.name button:first-child{width:43px}.name button+button{width:13px;border-left:1px solid #2a6f8c}
text{font-family:"Liberation Sans",sans-serif}`,
`<svg class="scene" viewBox="308 143 1604 889" fill="none" role="img" aria-label="Ring model, right view"><defs>
<filter id="soft" x="-10%" y="-50%" width="120%" height="200%"><feGaussianBlur stdDeviation="5"/></filter>
<linearGradient id="metal" x1="0" y1="66" x2="0" y2="1520" gradientUnits="userSpaceOnUse">${stops([[0, '#006b48'], [.14, '#007a50'], [.25, '#008458'], [.29, '#159a6c'], [.34, '#44c898'], [.375, '#6cecc0'], [.42, '#70efc4'], [.46, '#4cc69c'], [.5, '#2b9c74'], [.54, '#0b7650'], [.6, '#006c46'], [.72, '#005436'], [.83, '#003420'], [.92, '#001008'], [.98, '#000']])}</linearGradient>
<linearGradient id="back" x1="115" y1="0" x2="420" y2="0" gradientUnits="userSpaceOnUse">${stops([[0, '#00573a'], [.45, '#005034'], [1, '#00301e']])}</linearGradient>
<linearGradient id="backr">${stops([[0, '#001c10'], [.6, '#000d07'], [1, '#000']])}</linearGradient>
<linearGradient id="cup">${stops([[0, '#0b5038'], [.5, '#107048'], [1, '#003820']])}</linearGradient>
<linearGradient id="cupb">${stops([[0, '#00007c'], [.45, '#0c0cd8'], [.6, '#0000b8'], [1, '#000080']])}</linearGradient>
<linearGradient id="post">${stops([[0, '#00008c'], [.3, '#0000d4'], [.5, '#5c5cec'], [.62, '#0000dc'], [1, '#00008c']])}</linearGradient>
<radialGradient id="prong" cx=".42" cy=".35">${stops([[0, '#1a20c8'], [.6, '#0000a4'], [1, '#000070']])}</radialGradient></defs>
${band}${head}
<path d="M1113.500 852v89M1163 851v90M1075 928h14M1188 928h13" stroke="#c4c4c4" stroke-width="1.600"/><path d="M1088 922l24 6-24 6zM1188 922l-24 6 24 6z" fill="#fff"/>
<text x="1143" y="922" font-size="51" text-anchor="middle" fill="#fff">1.98</text>
<path d="M345 965v30" stroke="#b08c50" stroke-width="1.500"/><path d="M345 995h30" stroke="#2c7c88" stroke-width="1.500"/>
<text x="347" y="967" font-size="13" fill="#d0b890">z</text><text x="377" y="997" font-size="14" fill="#4ca0ae">y</text>
<path d="M1859 158l4-3h11l5 3-7 4h-6zM1863 158h15M1872 154v8" stroke="#5878c8" stroke-width="1.400"/><path d="M1864 166l7-5 8 5-3 18v15l-2 4h-5l-2-4v-15zM1864 169h15M1867 184h9M1867 199h9M1868 170l1 28M1876 170l-2 28" stroke="#d8a468" stroke-width="1.300"/>
</svg>
<div class="name"><button>Right</button><button aria-label="View menu">${svg(7, 4, '<path d="M0 0h7L3.500 4z" fill="#0c2c40"/>')}</button></div>`);

/* ---------- workspace ---------- */
define('work-space', `
:host{display:flex;flex-direction:column;flex:1;min-width:0;background:#b1b4b5;border:solid #fff;border-width:1px 0 0 2px;padding:5px 8px 8px 6px}
ring-view{flex:1;border-top:1px solid #124}`,
`<command-area></command-area><view-tabs></view-tabs><ring-view></ring-view>`);

/* ---------- taskbar ---------- */
const W = 'stroke="#f2f2f2" stroke-width="1.300"';
const apps = [
  '<path d="M4 6l7-1v7H4zM12 5l8-1v8h-8zM4 13h7v7l-7-1zM12 13h8v8l-8-1z" fill="#fff"/>',
  '<circle cx="12" cy="12" r="7" stroke="#fff" stroke-width="2"/>',
  '<circle cx="12" cy="12" r="12" fill="#1b7ec8"/><path d="M2 8Q7-1 15 0q9 2 9 11-1 5-8 5-4-1-2-4 0-5-6-5-4 0-6 1z" fill="#45d3b2"/><path d="M15 0q9 2 9 11-1 4-6 5 4-9-6-13z" fill="#70dc70"/><path d="M1 8q8-4 10 3-4 8 4 12Q2 25 0 14z" fill="#125ba8"/><path d="M0 16h12v8H0z" fill="#c67817"/><path d="M4 16v-2h4v2" stroke="#a05808"/><path d="M5 18h2v2H5z" fill="#ffdd71"/>',
  '<path d="M8 7V1h9v6" stroke="#369bdc" stroke-width="2"/><path d="M1 5h23v15q0 4-4 4H5q-4 0-4-4z" fill="#f5f5f5"/><path d="M8 9h4v4H8z" fill="#d85a32"/><path d="M13 9h4v4h-4z" fill="#729e3f"/><path d="M8 14h4v4H8z" fill="#4590c8"/><path d="M13 14h4v4h-4z" fill="#e2a331"/>',
  '<path d="M0 8l12-8 12 8v15H0z" fill="#1260a8"/><path d="M1 7h22v10H1z" fill="#e9f4fc"/><path d="M0 8l12 8L24 8v15H0z" fill="#1d8fe0"/><path d="M0 23l12-9 12 9z" fill="#35b5f5"/>',
  '<path d="M12 3q10 0 10 9-1 9-9 10-6 0-4-5-8 3-8-3Q2 4 12 3z" fill="#d9e1e5"/><circle cx="7" cy="10" r="2" fill="#d84545"/><circle cx="11" cy="7" r="2" fill="#eab52e"/><circle cx="17" cy="9" r="2" fill="#55a946"/><circle cx="10" cy="15" r="2" fill="#222"/><circle cx="17" cy="15" r="2" fill="#3c7cc8"/><path d="M12 23L20 7" stroke="#9a6a38" stroke-width="2"/><path d="M18 8l1-6 5-1-2 8z" fill="#c88d4b"/>',
  '<circle cx="12" cy="12" r="12" fill="#75bf4b"/><circle cx="12" cy="12" r="5" stroke="#f4f8ec" stroke-width="2.500"/><path d="M13 8L13 0l4 1-1 7 5-6 3 3-6 5 6-1v3" fill="#f2f0e4" stroke="#557a3a" stroke-width=".6"/><path d="M4 8q3-5 8-5" stroke="#b7e398" stroke-width="2"/>',
  '<path d="M1 3h8l2 2h12v4H1z" fill="#d99a25"/><path d="M1 7h22v14H1z" fill="#ffd768"/><path d="M5 13h14v8h-4v-4h-6v4H5z" fill="#5591b4"/>',
  '<circle cx="12" cy="12" r="12" fill="#2ba7cf"/><path d="M2 10l4 8 4-8" stroke="#d8f6ff" stroke-width="1.300"/><circle cx="16" cy="5" r="3" stroke="#d8f6ff"/><circle cx="16" cy="14" r="6" stroke="#d8f6ff" stroke-width="1.300"/><path d="M11 18h1" stroke="#fff"/>'
];
define('task-bar', `
:host{display:flex;background:#1e1e22;color:#eee;font:12px/18px Roboto,sans-serif;align-items:stretch}
.apps{display:flex}
.apps button{width:49px}.apps .on{background:#4a4c50;border-bottom:2px solid #76b9ed}
.tray{display:flex;align-items:center;margin-left:auto}
.tray>button{height:40px;width:24px}
.tray .more{width:19px;align-items:flex-start;padding-top:6px}
.tray .ppl{width:48px;margin-right:53px}
.tray .wx{width:147px;gap:8px;white-space:nowrap;justify-content:flex-start;font:13px/18px "Open Sans",sans-serif}
.tray .desk{width:52px}
.tray .wide{width:32px}
.tray .clock{width:64px;flex-direction:column;white-space:nowrap}
.tray .note{width:48px;margin-right:5px}`,
`<div class="apps">${apps.map((s, i) => `<button class="${i === 8 ? 'on' : ''}">${svg(24, 24, s)}</button>`).join('')}</div>
<div class="tray"><button class="desk">Desktop</button><button class="more" aria-label="More">${svg(9, 7, '<path d="M1 0l3 3.500L1 7M5 0l3 3.500L5 7" stroke="#fff" stroke-width="1.400"/>')}</button>
<button class="ppl" aria-label="People">${svg(16, 18, `<circle cx="10" cy="4.500" r="3" ${W}/><circle cx="5" cy="10" r="2.500" ${W}/><path d="M1 17q0-4 4-4t4 4M7 9q7-3 8 4" ${W}/>`)}</button>
<button class="wx">${svg(24, 18, `<path d="M1 2h19v14H3q-2 0-2-2zM20 5h3v9q0 2-3 2M4 5h13M4 8h6v5H4zM12 8h5M12 10.500h5M12 13h5" ${W}/>`)}<span>29°C</span><span>Nhiều mây</span></button>
<button aria-label="Hidden icons">${svg(12, 8, `<path d="M1 7l5-5 5 5" ${W}/>`)}</button>
<button aria-label="Network">${svg(18, 16, `<path d="M5 3h12v8H7M11 11v3M7 14h8M1 1h4v5H1zM3 6v7" ${W}/>`)}</button>
<button aria-label="Cloud">${svg(18, 16, '<path d="M3 12q-4-3 0-6 1-5 6-4 5-1 6 4 4 4-1 6z" fill="#1c78c8"/><circle cx="12" cy="11" r="4.500" fill="#ccecf8"/><path d="M10 10q2-2 4 0M14 12q-2 2-4 0" stroke="#175a80"/>')}</button>
<button aria-label="Volume">${svg(18, 16, `<path d="M1 6h2l4-4v12l-4-4H1zM10 5q2 3 0 6M12 3q4 5 0 10M14.500 1q5 7 0 14" ${W}/>`)}</button>
<button class="wide" aria-label="Pen">${svg(18, 18, `<path d="M2 16l2-5L12 2q4-1 3 3l-8 9zM2 12q-2-4 2-3t4 4M13 8q4-1 3 4-1 2-3 0" ${W}/>`)}</button>
<button class="wide" aria-label="Keyboard">${svg(24, 14, `<path d="M1 1h22v12H1z" ${W}/><path d="M4 4h16M4 7h16M7 10h10" stroke="#eee" stroke-dasharray="2 1"/>`)}</button>
<button class="clock"><span>10:45 AM</span><span>1/5/2024</span></button>
<button class="note" aria-label="Notifications">${svg(28, 26, '<path d="M2 3h16v12h-6l-4 4v-4H2z" fill="#fff"/><path d="M5 6h10M5 9h10M5 12h6" stroke="#222" stroke-width="1.300"/><circle cx="18" cy="17" r="7.500" fill="#333" stroke="#999"/><text x="18" y="21" text-anchor="middle" font-family="Open Sans" font-size="11" fill="#fff">2</text>')}</button></div>`);

/* ---------- app shell ---------- */
define('matrix-app', `
:host{display:grid;grid-template-rows:23px 22px minmax(0,1fr) 40px}
main{display:flex;min-height:0}`,
`<title-bar>Matrix 8.0 (64-bit) - 7094.3dm</title-bar><menu-strip></menu-strip><main><side-bar></side-bar><work-space></work-space></main><task-bar></task-bar>`);
</script>
</body>
</html>
